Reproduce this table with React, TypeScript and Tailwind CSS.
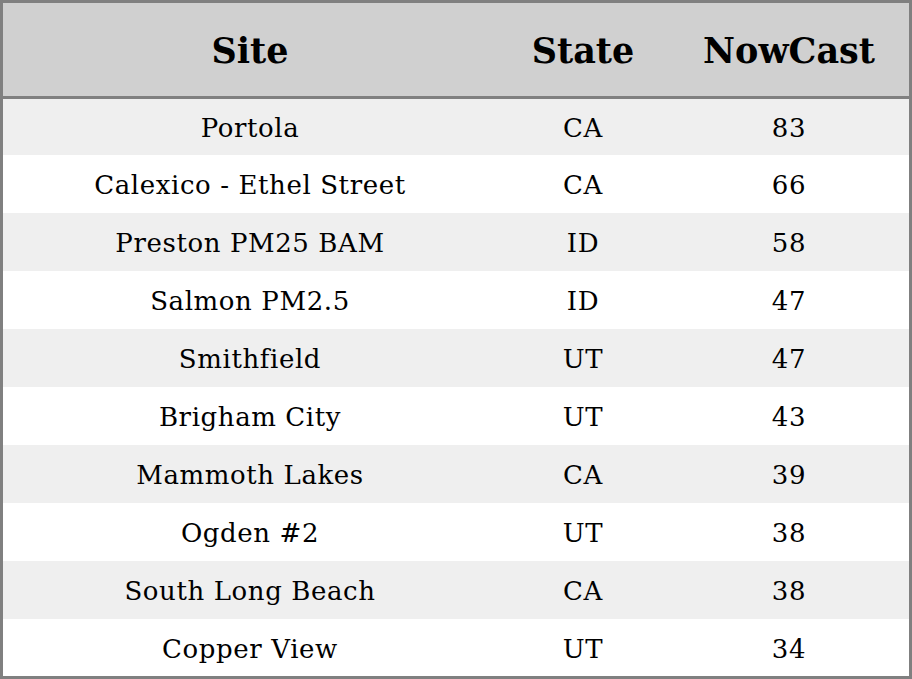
import React from "react";

const rows: [string, string, string][] = [
  ["Portola", "CA", "83"],
  ["Calexico - Ethel Street", "CA", "66"],
  ["Preston PM25 BAM", "ID", "58"],
  ["Salmon PM2.5", "ID", "47"],
  ["Smithfield", "UT", "47"],
  ["Brigham City", "UT", "43"],
  ["Mammoth Lakes", "CA", "39"],
  ["Ogden #2", "UT", "38"],
  ["South Long Beach", "CA", "38"],
  ["Copper View", "UT", "34"],
];

export default function App() {
  return (
    <div
      className="w-[912px] h-[679px] bg-white border-[3px] border-[#808080] flex flex-col text-black"
      style={{ fontFamily: '"DejaVu Serif", serif' }}
    >
      <div className="h-[96px] shrink-0 pt-[3px] bg-[#d0d0d0] grid grid-cols-[494px_172px_240px] items-center text-[35px] font-bold border-b-[3px] border-[#808080]">
        <div className="text-center">Site</div>
        <div className="text-center">State</div>
        <div className="text-center">NowCast</div>
      </div>
      {rows.map((r, i) => (
        <div
          key={i}
          className={`grid shrink-0 pt-[3px] grid-cols-[494px_172px_240px] items-center text-[26px] tracking-[0.6px] ${
            i % 2 === 0 ? "bg-[#efefef]" : "bg-white"
          } ${i === 0 ? "h-[56px]" : i === rows.length - 1 ? "h-[57px]" : "h-[58px]"}`}
        >
          <div className="text-center">{r[0]}</div>
          <div className="text-center">{r[1]}</div>
          <div className="text-center">{r[2]}</div>
        </div>
      ))}
    </div>
  );
}
